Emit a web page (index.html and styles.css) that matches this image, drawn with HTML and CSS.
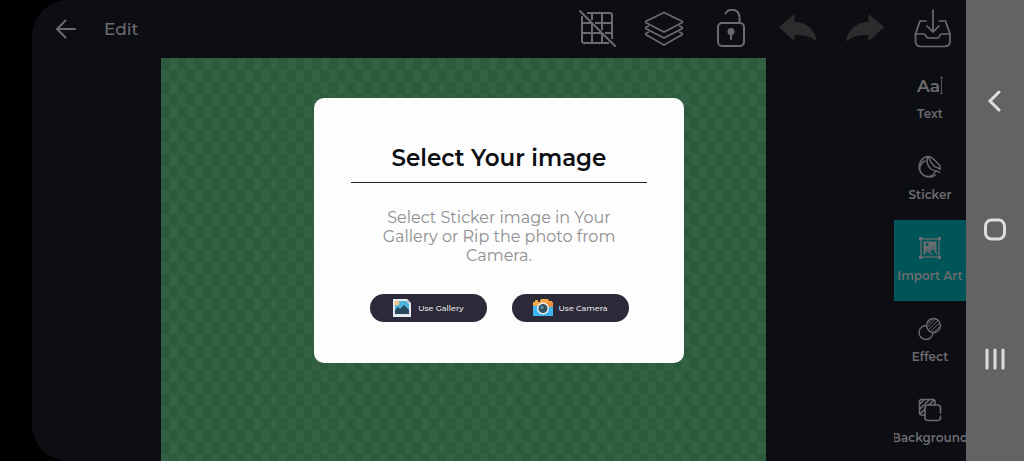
FILE: index.html
```html
<!DOCTYPE html>
<html lang="en">
<head>
    <meta charset="UTF-8">
    <meta name="viewport" content="width=device-width, initial-scale=1.0">
    <title>Edit</title>
    <link rel="stylesheet" href="styles.css">
</head>
<body>
    <div class="app">
        <header class="topbar">
            <button class="icon-btn back" aria-label="Back">
                <svg width="22" height="22" viewBox="0 0 22 22" fill="none" stroke="currentColor" stroke-width="2" stroke-linecap="round" stroke-linejoin="round"><path d="M20 11H2M10.500 2.500L2 11l8.500 8.500"/></svg>
            </button>
            <h1>Edit</h1>
            <div class="tools">
                <button class="icon-btn" aria-label="Grid off">
                    <svg width="40" height="40" viewBox="0 0 40 40" fill="none" stroke="currentColor" stroke-width="2"><path d="M9 4h23a2 2 0 0 1 2 2v24M4 7v25a2 2 0 0 0 2 2h25M14 4v7M24 4v17M34 14H17M34 24h-7M4 14h10M4 24h19M14 14v20M24 24v10"/><path d="M2 2l35 35" stroke-linecap="round"/></svg>
                </button>
                <button class="icon-btn" aria-label="Layers">
                    <svg width="40" height="40" viewBox="0 0 40 40" fill="none" stroke="currentColor" stroke-width="1.700" stroke-linejoin="round"><path d="M19 3.500l17.500 8.500q2 1 0 2L19 23 1.500 14q-2-1 0-2z"/><path d="M4 17l-2.500 1q-2 1 0 2L19 29l17.500-9q2-1 0-2L34 17M4 23l-2.500 1q-2 1 0 2L19 36l17.500-10q2-1 0-2L34 23"/></svg>
                </button>
                <button class="icon-btn" aria-label="Unlock">
                    <svg width="40" height="40" viewBox="0 0 40 40" fill="none" stroke="currentColor" stroke-width="2" stroke-linecap="round"><rect x="6" y="14" width="26" height="23" rx="4"/><path d="M13.500 4.500A7.500 7.500 0 0 1 27.500 8v6"/><circle cx="19" cy="22.500" r="2.500" fill="currentColor"/><path d="M19 24v6"/></svg>
                </button>
                <button class="icon-btn dim" aria-label="Undo">
                    <svg width="40" height="40" viewBox="0 0 40 40" fill="currentColor"><path d="M0 18L15.500 5v8C28 13 36 21 38 32.500c-6-5-13-7-22.500-6.500v6.500z"/></svg>
                </button>
                <button class="icon-btn dim" aria-label="Redo">
                    <svg width="40" height="40" viewBox="0 0 40 40" fill="currentColor"><path d="M38 18L22.500 5v8C10 13 2 21 0 32.500c6-5 13-7 22.500-6.500v6.500z"/></svg>
                </button>
                <button class="icon-btn" aria-label="Save">
                    <svg width="40" height="40" viewBox="0 0 40 40" fill="none" stroke="currentColor" stroke-width="1.700" stroke-linecap="round" stroke-linejoin="round"><path d="M13 12H7L2.500 25v7q0 5.500 5.500 5.500h23.500q5.500 0 5.500-5.500v-7L32.500 12H26"/><path d="M2.500 25H11q1.500 0 2 2t2.500 2h8.500q2 0 2.500-2t2-2H37M20 1v22M14 17l6 6 6-6"/></svg>
                </button>
            </div>
        </header>

        <main class="workspace">
            <div class="canvas"></div>
            <nav class="sidebar">
                <button class="side-item">
                    <svg width="26" height="24" viewBox="0 0 26 24" fill="none" stroke="currentColor"><text class="aa" x="0" y="18">Aa</text><path d="M24.500 4v15M23 3.500h3M23 19.500h3" stroke-width=".8"/></svg>
                    <span>Text</span>
                </button>
                <button class="side-item">
                    <svg width="24" height="24" viewBox="0 0 24 24" fill="none" stroke="currentColor" stroke-width="1.400" stroke-linecap="round" stroke-linejoin="round"><path d="M10 1.500A10.300 10.300 0 1 0 17.500 20M10 1.500c2 0 4 1 6 3l4.500 4.500q2.500 3 1.500 5.500c-1-2-4-1.500-6-3.500S12 6 10 1.500z"/><path d="M10 1.500C8 4 9 11 13 14s7 1 8.500 3.500M7 6a8 8 0 1 0 10 11"/></svg>
                    <span>Sticker</span>
                </button>
                <button class="side-item active">
                    <svg width="24" height="24" viewBox="0 0 24 24" fill="none" stroke="currentColor" stroke-width="1.300"><rect x="3" y="3" width="18" height="18"/><path d="M5.500 5.500h13v10l-3.500-5-3.500 4-2-2-4 5z" fill="currentColor" stroke="none"/><circle class="sun" cx="9" cy="8.500" r="1.500"/><path d="M5.500 19l4-5 4.500 5M11.500 15.500l3.500-3.500 4 6"/><path d="M1 1h3v3H1zM20 1h3v3h-3zM1 20h3v3H1zM20 20h3v3h-3z" fill="currentColor" stroke="none"/></svg>
                    <span>Import Art</span>
                </button>
                <button class="side-item">
                    <svg width="24" height="24" viewBox="0 0 24 24" fill="none" stroke="currentColor" stroke-width="1.400"><path d="M8.500 8.500A7 7 0 1 0 15 15.500"/><circle cx="15.500" cy="8.500" r="7"/><path d="M9.500 7l4.500-4.500M9 10.500L17.500 2M10 13L20 3.500M12.500 14.500l9-8.500M15.500 15.500l6.500-6" stroke-width="1"/></svg>
                    <span>Effect</span>
                </button>
                <button class="side-item">
                    <svg width="24" height="24" viewBox="0 0 24 24" fill="none" stroke="currentColor" stroke-width="1.600" stroke-linecap="round"><path d="M22.500 18v1.500a3 3 0 0 1-3 3H10a3 3 0 0 1-3-3V10a3 3 0 0 1 3-3h9.500a3 3 0 0 1 3 3v5"/><path d="M7 17H3.500a2 2 0 0 1-2-2V3.500a2 2 0 0 1 2-2H15a2 2 0 0 1 2 2V7M2 6l4-4M2 11l9-9M2 16l5-5M11 7l5-5"/></svg>
                    <span>Background</span>
                </button>
            </nav>
        </main>

        <div class="overlay">
            <section class="modal" role="dialog" aria-labelledby="title">
                <h2 id="title">Select Your image</h2>
                <p>Select Sticker image in Your Gallery or Rip the photo from Camera.</p>
                <div class="actions">
                    <button class="pill">
                        <svg width="20" height="20" viewBox="0 0 20 20"><path d="M1 1h14l4 4v14H1z" fill="#e4eaf0"/><path d="M3 3h11l3 3v10H3z" fill="#4cb4dc"/><circle cx="5" cy="5" r="2.500" fill="#f3c48c"/><path d="M3 12l3-3 2 2 4-4 5 5v4H3z" fill="#27485b"/><path d="M15 1v4h4z" fill="#b9c6d2"/></svg>
                        Use Gallery
                    </button>
                    <button class="pill">
                        <svg width="20" height="20" viewBox="0 0 20 20"><path d="M2 2h3v2H2zM7 3l1-2h7l1 2h3v6H0V4h7z" fill="#f6a94a"/><path d="M0 8h20v10H0z" fill="#3db5f2"/><path d="M14 4h6v5h-6z" fill="#f08f3c"/><circle cx="10" cy="10.500" r="6" fill="#e9eef2"/><circle cx="10" cy="10.500" r="4.500" fill="#34505f"/><circle cx="9" cy="9.500" r="1.500" fill="#6f8c99"/></svg>
                        Use Camera
                    </button>
                </div>
            </section>
        </div>
    </div>

    <div class="system-nav">
        <button aria-label="Back"><svg width="24" height="24" viewBox="0 0 24 24"><path d="M16 4l-9 9 9 9"/></svg></button>
        <button aria-label="Home"><svg width="24" height="24" viewBox="0 0 24 24"><rect x="2.500" y="3" width="19" height="19" rx="6"/></svg></button>
        <button aria-label="Recent apps"><svg width="24" height="24" viewBox="0 0 24 24"><path d="M4 4v18M12 4v18M20 4v18"/></svg></button>
    </div>
</body>
</html>
```
FILE: styles.css
```css
* {
    box-sizing: border-box;
    margin: 0;
    padding: 0;
}
body {
    display: flex;
    height: 100vh;
    padding-left: 32px;
    overflow: hidden;
    background-color: #000;
    color: #6b6b6d;
    font-family: Montserrat, Inter, "Open Sans", sans-serif;
}
button {
    border: 0;
    background: none;
    color: inherit;
    font-family: inherit;
    cursor: pointer;
}
.app {
    position: relative;
    flex: 1;
    display: flex;
    flex-direction: column;
    overflow: hidden;
    background-color: #0d0e13;
    border-radius: 36px 0 0 36px;
}

/* top bar */
.topbar {
    display: flex;
    align-items: center;
    height: 58px;
    flex-shrink: 0;
}
.icon-btn {
    display: flex;
    align-items: center;
    justify-content: center;
    width: 67px;
    height: 58px;
}
.icon-btn.dim {
    color: #2c2c2d;
}
.topbar h1 {
    padding-left: 5px;
    font-size: 17px;
    font-weight: 500;
}
.tools {
    display: flex;
    margin-left: auto;
}

/* canvas and side menu */
.workspace {
    display: flex;
    flex: 1;
    min-height: 0;
}
.canvas {
    flex: 1;
    margin: 0 128px 0 129px;
    background: repeating-conic-gradient(#2b5a3d 0 25%, #346143 0 50%) 0 12px / calc(100% / 36) 24px;
}
.sidebar {
    width: 72px;
}
.side-item {
    display: flex;
    flex-direction: column;
    align-items: center;
    justify-content: center;
    gap: 7px;
    width: 100%;
    height: 81px;
    overflow: hidden;
    font-size: 12px;
    font-weight: 600;
    line-height: 18px;
}
.side-item.active {
    background-color: #005558;
}
.aa {
    fill: currentColor;
    stroke: none;
    font-size: 17px;
    font-weight: 600;
}
.sun {
    fill: #005558;
    stroke: none;
}

/* dialog */
.overlay {
    position: absolute;
    inset: 0;
    display: flex;
    align-items: center;
    justify-content: center;
}
.modal {
    width: 370px;
    padding: 42px 37px 41px;
    border-radius: 10px;
    background-color: #fdfdfd;
    text-align: center;
}
.modal h2 {
    padding-bottom: 6px;
    border-bottom: 1px solid #222226;
    color: #0d0e13;
    font-size: 23px;
    font-weight: 600;
    line-height: 36px;
}
.modal p {
    padding: 25px 24px 29px;
    color: #8e8e90;
    font-size: 16px;
    line-height: 19px;
}
.actions {
    display: flex;
    justify-content: center;
    gap: 25px;
}
.pill {
    display: flex;
    align-items: center;
    justify-content: center;
    gap: 6px;
    width: 117px;
    height: 28px;
    border-radius: 14px;
    background-color: #2c2a39;
    color: #e6e6ea;
    font-size: 8px;
    font-weight: 500;
}

/* phone navigation */
.system-nav {
    display: flex;
    flex-direction: column;
    justify-content: center;
    width: 58px;
    background-color: #636363;
}
.system-nav button {
    height: 129px;
}
.system-nav svg {
    fill: none;
    stroke: #dedede;
    stroke-width: 3;
    stroke-linecap: round;
}
```
